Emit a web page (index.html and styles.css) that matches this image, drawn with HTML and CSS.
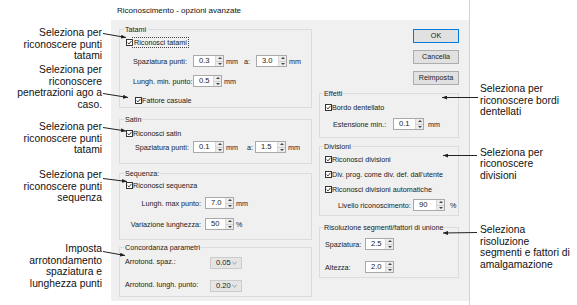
FILE: index.html
```html
<!DOCTYPE html>
<html lang="it">
<head>
    <meta charset="UTF-8">
    <title>Riconoscimento - opzioni avanzate</title>
    <link rel="stylesheet" href="styles.css">
</head>
<body>
<div class="page">
    <!-- Callouts on the left -->
    <div class="notes notes-left">
        <p class="note n1">Seleziona per<br>riconoscere punti<br>tatami</p>
        <p class="note n2">Seleziona per<br>riconoscere<br>penetrazioni ago a<br>caso.</p>
        <p class="note n3">Seleziona per<br>riconoscere punti<br>tatami</p>
        <p class="note n4">Seleziona per<br>riconoscere punti<br>sequenza</p>
        <p class="note n5">Imposta<br>arrotondamento<br>spaziatura e<br>lunghezza punti</p>
    </div>

    <!-- The dialog -->
    <div class="dialog">
        <div class="dialog-title">Riconoscimento - opzioni avanzate</div>
        <div class="dialog-body">
            <div class="col col-left">
                <div class="group g-tatami">
                    <div class="group-title">Tatami</div>
                    <div class="check mt3"><span class="box"><svg viewBox="0 0 5 5"><polyline points="0.6,2.5 2,3.9 4.5,0.9"/></svg></span><span class="focus">Riconosci tatami</span></div>
                    <div class="field mt8 in7">
                        <span class="lbl w60">Spaziatura punti:</span>
                        <span class="spin w31"><span class="spin-val">0.3</span><span class="spin-btns"><i class="up"></i><i class="down"></i></span></span>
                        <span class="unit w18">mm</span>
                        <span class="unit w12">a:</span>
                        <span class="spin w31"><span class="spin-val">3.0</span><span class="spin-btns"><i class="up"></i><i class="down"></i></span></span>
                        <span class="unit">mm</span>
                    </div>
                    <div class="field mt8 in7">
                        <span class="lbl w60">Lungh. min. punto:</span>
                        <span class="spin w29"><span class="spin-val">0.5</span><span class="spin-btns"><i class="up"></i><i class="down"></i></span></span>
                        <span class="unit">mm</span>
                    </div>
                    <div class="check mt8 in9"><span class="box"><svg viewBox="0 0 5 5"><polyline points="0.6,2.5 2,3.9 4.5,0.9"/></svg></span>Fattore casuale</div>
                </div>

                <div class="group g-satin">
                    <div class="group-title">Satin</div>
                    <div class="check mt4"><span class="box"><svg viewBox="0 0 5 5"><polyline points="0.6,2.5 2,3.9 4.5,0.9"/></svg></span>Riconosci satin</div>
                    <div class="field mt3 in9">
                        <span class="lbl w58">Spaziatura punti:</span>
                        <span class="spin w31"><span class="spin-val">0.1</span><span class="spin-btns"><i class="up"></i><i class="down"></i></span></span>
                        <span class="unit w21">mm</span>
                        <span class="unit w8">a:</span>
                        <span class="spin w31"><span class="spin-val">1.5</span><span class="spin-btns"><i class="up"></i><i class="down"></i></span></span>
                        <span class="unit">mm</span>
                    </div>
                </div>

                <div class="group g-sequenza">
                    <div class="group-title">Sequenza:</div>
                    <div class="check mt2"><span class="box"><svg viewBox="0 0 5 5"><polyline points="0.6,2.5 2,3.9 4.5,0.9"/></svg></span>Riconosci sequenza</div>
                    <div class="field mt7">
                        <span class="lbl right w79">Lungh. max punto:</span>
                        <span class="spin w29"><span class="spin-val">7.0</span><span class="spin-btns"><i class="up"></i><i class="down"></i></span></span>
                        <span class="unit">mm</span>
                    </div>
                    <div class="field mt9">
                        <span class="lbl right w79">Variazione lunghezza:</span>
                        <span class="spin w29"><span class="spin-val">50</span><span class="spin-btns"><i class="up"></i><i class="down"></i></span></span>
                        <span class="unit">%</span>
                    </div>
                </div>

                <div class="group g-concordanza">
                    <div class="group-title">Concordanza parametri</div>
                    <div class="field mt5 out1">
                        <span class="lbl w85 top">Arrotond. spaz.:</span>
                        <span class="combo">0.05<svg viewBox="0 0 6 4"><polyline points="0.5,0.8 3,3.2 5.5,0.8"/></svg></span>
                    </div>
                    <div class="field mt11 out1">
                        <span class="lbl w85 top">Arrotond. lungh. punto:</span>
                        <span class="combo">0.20<svg viewBox="0 0 6 4"><polyline points="0.5,0.8 3,3.2 5.5,0.8"/></svg></span>
                    </div>
                </div>
            </div>

            <div class="col col-right">
                <div class="btn btn-default">OK</div>
                <div class="btn">Cancella</div>
                <div class="btn">Reimposta</div>

                <div class="group g-effetti">
                    <div class="group-title">Effetti</div>
                    <div class="check mt4"><span class="box"><svg viewBox="0 0 5 5"><polyline points="0.6,2.5 2,3.9 4.5,0.9"/></svg></span>Bordo dentellato</div>
                    <div class="field mt6 in8">
                        <span class="lbl w60">Estensione min.:</span>
                        <span class="spin w31"><span class="spin-val">0.1</span><span class="spin-btns"><i class="up"></i><i class="down"></i></span></span>
                        <span class="unit gap4">mm</span>
                    </div>
                </div>

                <div class="group g-divisioni">
                    <div class="group-title">Divisioni</div>
                    <div class="check mt3"><span class="box"><svg viewBox="0 0 5 5"><polyline points="0.6,2.5 2,3.9 4.5,0.9"/></svg></span>Riconosci divisioni</div>
                    <div class="check mt5"><span class="box"><svg viewBox="0 0 5 5"><polyline points="0.6,2.5 2,3.9 4.5,0.9"/></svg></span>Div. prog. come div. def. dall'utente</div>
                    <div class="check mt5"><span class="box"><svg viewBox="0 0 5 5"><polyline points="0.6,2.5 2,3.9 4.5,0.9"/></svg></span>Riconosci divisioni automatiche</div>
                    <div class="field mt5 in13">
                        <span class="lbl w75">Livello riconoscimento:</span>
                        <span class="spin w32"><span class="spin-val">90</span><span class="spin-btns"><i class="up"></i><i class="down"></i></span></span>
                        <span class="unit gap5">%</span>
                    </div>
                </div>

                <div class="group g-risoluzione">
                    <div class="group-title">Risoluzione segmenti/fattori di unione</div>
                    <div class="field mt6">
                        <span class="lbl w40">Spaziatura:</span>
                        <span class="spin w29"><span class="spin-val">2.5</span><span class="spin-btns"><i class="up"></i><i class="down"></i></span></span>
                    </div>
                    <div class="field mt11">
                        <span class="lbl w40">Altezza:</span>
                        <span class="spin w29"><span class="spin-val">2.0</span><span class="spin-btns"><i class="up"></i><i class="down"></i></span></span>
                    </div>
                </div>
            </div>
        </div>
    </div>

    <!-- Callouts on the right -->
    <div class="notes notes-right">
        <p class="note r1">Seleziona per<br>riconoscere bordi<br>dentellati</p>
        <p class="note r2">Seleziona per<br>riconoscere<br>divisioni</p>
        <p class="note r3">Seleziona<br>risoluzione<br>segmenti e fattori di<br>amalgamazione</p>
    </div>
</div>

<!-- Leader lines, drawn over the dialog -->
<svg class="arrows" viewBox="0 0 577 305">
    <defs>
        <marker id="head" markerWidth="5" markerHeight="4" refX="5" refY="2" orient="auto" markerUnits="userSpaceOnUse">
            <path d="M0,0 L5,2 L0,4 z"/>
        </marker>
    </defs>
    <line x1="103" y1="33.5" x2="126" y2="37.5" marker-end="url(#head)"/>
    <line x1="103" y1="93.5" x2="128" y2="97.5" marker-end="url(#head)"/>
    <line x1="103" y1="127.5" x2="126" y2="131" marker-end="url(#head)"/>
    <line x1="103" y1="178.5" x2="127" y2="181.5" marker-end="url(#head)"/>
    <line x1="103" y1="251.5" x2="125" y2="255.5" marker-end="url(#head)"/>
    <line x1="478" y1="97.5" x2="442" y2="97.5" marker-end="url(#head)"/>
    <line x1="477" y1="155.5" x2="443" y2="155.5" marker-end="url(#head)"/>
    <line x1="477" y1="232.5" x2="443" y2="233" marker-end="url(#head)"/>
</svg>
</body>
</html>
```

FILE: styles.css
```css
* {
    box-sizing: border-box;
}
body {
    margin: 0;
    width: 577px;
    height: 305px;
    position: relative;
    overflow: hidden;
    background-color: #FFFFFF;
    font-family: "Liberation Sans", Arial, sans-serif;
    color: #1A1A1A;
}
.page {
    display: flex;
    height: 305px;
}

/* Callout texts */
.notes {
    font-size: 10.3px;
    line-height: 11.5px;
    color: #111111;
}
.notes p {
    margin: 0;
}
.notes-left {
    width: 111px;
    padding-right: 9px;
    text-align: right;
}
.n1 { margin-top: 27px !important; }
.n2 { margin-top: 2.5px !important; }
.n3 { margin-top: 11px !important; }
.n4 { margin-top: 13.5px !important; }
.n5 { margin-top: 39.5px !important; }
.notes-right {
    flex: 1;
    padding-left: 10px;
}
.r1 { margin-top: 83px !important; }
.r2 { margin-top: 29px !important; }
.r3 { margin-top: 43px !important; }

/* Dialog window */
.dialog {
    width: 359px;
    border-right: 1px solid #D2D2D2;
    display: flex;
    flex-direction: column;
}
.dialog-title {
    height: 20px;
    padding: 6px 0 0 6px;
    font-size: 8px;
    line-height: 9px;
    color: #111111;
}
.dialog-body {
    height: 281px;
    background-color: #F0F0F0;
    display: flex;
    gap: 7px;
    padding: 9px 10px 0 8px;
    font-size: 7.2px;
    line-height: 9px;
}
.col {
    display: flex;
    flex-direction: column;
}
.col-left { width: 193px; }
.col-right { width: 140px; }

/* Group boxes */
.group {
    border: 1px solid #DCDCDC;
    display: flex;
    flex-direction: column;
    padding-left: 6px;
}
.col-right .group {
    padding-left: 5px;
}
.group-title {
    align-self: flex-start;
    height: 9px;
    margin: -5px 0 0 -2px;
    padding: 0 1px;
    background-color: #F0F0F0;
}
.g-tatami { height: 79px; }
.g-satin { height: 45px; margin-top: 11px; }
.g-sequenza { height: 67px; margin-top: 9px; }
.g-concordanza { height: 50px; margin-top: 7px; }
.g-effetti { height: 45px; margin-top: 8px; }
.g-divisioni { height: 70px; margin-top: 8px; }
.g-risoluzione { height: 51px; margin-top: 11px; }

.mt2 { margin-top: 2px; }
.mt3 { margin-top: 3px; }
.mt4 { margin-top: 4px; }
.mt5 { margin-top: 5px; }
.mt6 { margin-top: 6px; }
.mt7 { margin-top: 7px; }
.mt8 { margin-top: 8px; }
.mt9 { margin-top: 9px; }
.mt11 { margin-top: 11px; }
.in7 { padding-left: 7px; }
.in8 { padding-left: 8px; }
.in9 { padding-left: 9px; }
.in13 { padding-left: 13px; }
.out1 { margin-left: -1px; }

/* Checkboxes */
.check {
    display: flex;
    align-items: center;
    height: 10px;
    white-space: nowrap;
}
.box {
    width: 7px;
    height: 7px;
    border: 1px solid #333333;
    background-color: #FFFFFF;
    display: flex;
    align-items: center;
    justify-content: center;
}
.box svg {
    width: 5px;
    height: 5px;
    fill: none;
    stroke: #222222;
    stroke-width: 0.9;
}
.focus {
    border: 1px dotted #444444;
    margin-left: -1px;
    padding: 0 1px;
    line-height: 9px;
}

/* Label + spin rows */
.field {
    display: flex;
    align-items: center;
    height: 12px;
    white-space: nowrap;
}
.lbl { flex: none; }
.lbl.right { text-align: right; padding-right: 4px; }
.lbl.top { align-self: flex-start; }
.w8 { width: 8px; }
.w12 { width: 12px; }
.w18 { width: 18px; }
.w21 { width: 21px; }
.w29 { width: 29px; }
.w31 { width: 31px; }
.w32 { width: 32px; }
.w40 { width: 40px; }
.w58 { width: 58px; }
.w60 { width: 60px; }
.w75 { width: 75px; }
.w79 { width: 79px; }
.w85 { width: 85px; }
.unit {
    flex: none;
    margin-left: 2px;
}
.unit.w12, .unit.w8 { margin-left: 0; }
.unit.gap4 { margin-left: 4px; }
.unit.gap5 { margin-left: 5px; }

.spin {
    flex: none;
    height: 12px;
    display: flex;
    border: 1px solid #A9A9A9;
    background-color: #FFFFFF;
}
.spin-val {
    flex: 1;
    padding-left: 5px;
    line-height: 10px;
    font-size: 7.6px;
}
.spin-btns {
    width: 8px;
    display: flex;
    flex-direction: column;
    background-color: #ECECEC;
    border-left: 1px solid #D8D8D8;
}
.spin-btns i {
    flex: 1;
    display: flex;
    align-items: center;
    justify-content: center;
}
.spin-btns i.up { border-bottom: 1px solid #D0D0D0; }
.spin-btns i::after {
    content: "";
    width: 0;
    height: 0;
    border-left: 2px solid transparent;
    border-right: 2px solid transparent;
}
.spin-btns i.up::after { border-bottom: 2px solid #444444; }
.spin-btns i.down::after { border-top: 2px solid #444444; }

.combo {
    flex: none;
    width: 32px;
    height: 12px;
    display: flex;
    align-items: center;
    justify-content: space-between;
    padding: 0 4px 0 5px;
    border: 1px solid #CCCCCC;
    background-color: #E5E5E5;
    line-height: 10px;
    font-size: 7.6px;
}
.combo svg {
    width: 5px;
    height: 4px;
    fill: none;
    stroke: #666666;
    stroke-width: 0.8;
}

/* Buttons */
.btn {
    align-self: flex-end;
    width: 46px;
    height: 14px;
    margin-bottom: 7px;
    border: 1px solid #ADADAD;
    background-color: #E1E1E1;
    text-align: center;
    line-height: 12px;
}
.btn:nth-of-type(3) { margin-bottom: 0; }
.btn-default {
    border-color: #0078D7;
}

/* Leader lines */
.arrows {
    position: absolute;
    top: 0;
    left: 0;
    width: 577px;
    height: 305px;
    pointer-events: none;
}
.arrows line {
    stroke: #222222;
    stroke-width: 1;
}
.arrows marker path {
    fill: #222222;
}
```
